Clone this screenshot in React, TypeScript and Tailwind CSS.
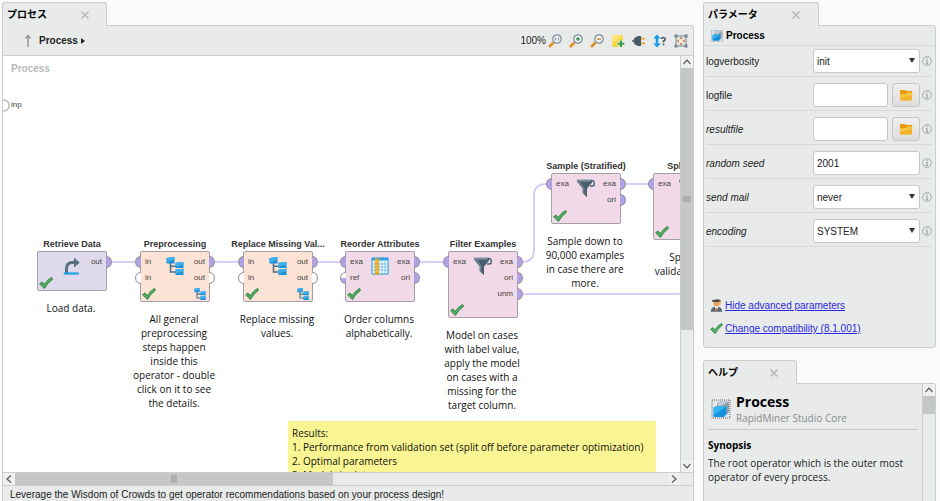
import type { ReactNode } from 'react';
import { clsx } from 'clsx';

type PortKind = 'full' | 'empty' | 'half';
type Port = { label: string; kind: PortKind };
type IconName = 'retrieve' | 'tree' | 'table' | 'funnel';

type Operator = {
  name: string;
  x: number;
  y: number;
  height: number;
  color: string;
  icon: IconName;
  inputs: Port[];
  outputs: Port[];
  nested?: boolean;
  notes: string[];
};

const full = (label: string): Port => ({ label, kind: 'full' });
const empty = (label: string): Port => ({ label, kind: 'empty' });

const operators: Operator[] = [
  {
    name: 'Retrieve Data', x: 34, y: 195, height: 40, color: 'bg-[#dfdaeb]', icon: 'retrieve',
    inputs: [], outputs: [full('out')],
    notes: ['Load data.'],
  },
  {
    name: 'Preprocessing', x: 137, y: 195, height: 51, color: 'bg-[#fde3d6]', icon: 'tree',
    inputs: [full('in'), empty('in')], outputs: [full('out'), empty('out')], nested: true,
    notes: ['All general', 'preprocessing', 'steps happen', 'inside this', 'operator - double', 'click on it to see', 'the details.'],
  },
  {
    name: 'Replace Missing Val...', x: 240, y: 195, height: 51, color: 'bg-[#fde3d6]', icon: 'tree',
    inputs: [full('in'), empty('in')], outputs: [full('out'), empty('out')], nested: true,
    notes: ['Replace missing', 'values.'],
  },
  {
    name: 'Reorder Attributes', x: 342, y: 195, height: 51, color: 'bg-[#f1d9e7]', icon: 'table',
    inputs: [full('exa'), { label: 'ref', kind: 'half' }], outputs: [full('exa'), full('ori')],
    notes: ['Order columns', 'alphabetically.'],
  },
  {
    name: 'Filter Examples', x: 445, y: 195, height: 67, color: 'bg-[#f1d9e7]', icon: 'funnel',
    inputs: [full('exa')], outputs: [full('exa'), full('ori'), full('unm')],
    notes: ['Model on cases', 'with label value,', 'apply the model', 'on cases with a', 'missing for the', 'target column.'],
  },
  {
    name: 'Sample (Stratified)', x: 548, y: 117, height: 51, color: 'bg-[#f1d9e7]', icon: 'funnel',
    inputs: [full('exa')], outputs: [full('exa'), full('ori')],
    notes: ['Sample down to', '90,000 examples', 'in case there are', 'more.'],
  },
  {
    name: 'Split Data', x: 650, y: 117, height: 67, color: 'bg-[#f1d9e7]', icon: 'funnel',
    inputs: [full('exa')], outputs: [full('par')],
    notes: ['Split off', 'validation set.'],
  },
];

const operatorIcons: Record<IconName, ReactNode> = {
  retrieve: (
    <svg viewBox="0 0 18 18" className="size-[18px]">
      <path d="M3.500 16V11.500Q3.500 5.500 9.500 5.500H12" fill="none" stroke="#56707f" strokeWidth="3" />
      <path d="M11 .8 16.800 5.500 11 10.500z" fill="#56707f" />
      <path d="M.8 16.500h15" stroke="#1b9fe6" strokeWidth="2.200" />
    </svg>
  ),
  tree: <TreeIcon className="size-[18px]" />,
  table: (
    <svg viewBox="0 0 18 18" className="size-[18px]">
      <path d="M1 1h16v16H1z" fill="#fff" stroke="#1e94d4" />
      <path d="M1 1h16v2.500H1z" fill="#1e9de0" />
      <path d="M4 1v16M8 1v16M11 1v16M14 1v16M1 7h16M1 10h16M1 13h16" stroke="#5eb9e8" strokeWidth=".8" />
      <path d="M4 1.500h4v16H4z" fill="#f2a61c" />
      <path d="M4 5h4M4 8h4M4 11h4M4 14h4" stroke="#fbd27a" strokeWidth=".7" />
    </svg>
  ),
  funnel: (
    <svg viewBox="0 0 18 18" className="size-[18px]">
      <path d="M0 .8h15v2.700L10 9.500V18l-4.500-4V9.500L0 2.800z" fill="#6a808e" />
      <path d="M3.500 3H15L10 9.500V18l-2.500-2.200V9z" fill="#4a606e" />
      <path d="M0 1.200h15" stroke="#8799a5" strokeWidth=".8" />
      <path d="M13 7h2.500Q17.300 7 17.300 4.500T15.500 1.500Q13.500 1.500 13.500 4.500" fill="none" stroke="#4a606e" strokeWidth="1.400" />
    </svg>
  ),
};

function TreeIcon({ className }: { className: string }) {
  return (
    <svg viewBox="0 0 18 18" className={className}>
      <path d="M4.500 6v9H11M4.500 9.200H11" fill="none" stroke="#56707f" strokeWidth="1.600" />
      <path d="M.5 1 8.500 0v6.500h-8zM9.500 5.800l8-.8v6h-8zM9.500 12.600l8-.8V18h-8z" fill="#1a90d6" />
      <path d="M.5 1 8.500 0v2.500L.5 5.500zM9.500 5.800l8-.8v2.500l-8 2.500zM9.500 12.600l8-.8v2.500l-8 2.500z" fill="#3fb0ee" />
    </svg>
  );
}

function CheckIcon({ className }: { className: string }) {
  return (
    <svg viewBox="0 0 14 12" className={className}>
      <path d="M.5 6.800 3 4.800l2.200 2.500Q8.500 2.500 12.500.3l1.200 1.900Q8.500 6 5.500 11.700z" fill="#3d9b50" stroke="#287d3c" strokeWidth=".6" />
      <path d="M2 6.600 5.200 9.200Q8 4.500 12 1.800" fill="none" stroke="#6fc07b" strokeWidth=".8" />
    </svg>
  );
}

function ProcessIcon({ className }: { className: string }) {
  return (
    <svg viewBox="0 0 20 20" className={className}>
      <path d="M1 1h18v18H1z" fill="#e1e7ec" stroke="#58646f" strokeDasharray="1 1" />
      <path d="M6 4l2-1.500h10V13l-2 2.500H6z" fill="#929faa" />
      <path d="M6 4l2-1.500h10L8 8z" fill="#c2cbd3" />
      <path d="M2.500 9 4.500 7.500h11V15l-2.500 3H2.500z" fill="#1492dc" />
      <path d="M2.500 9 4.500 7.500h11L2.500 16z" fill="#35b5f5" />
    </svg>
  );
}

function FolderIcon() {
  return (
    <svg viewBox="0 0 14 12" className="h-3 w-[14px]">
      <path d="M1 1h5l1 1h6V11H1z" fill="#e99b0e" />
      <path d="M.5 5.500 7 5l1.500-1.500H13.500L12.800 11.500H1.500z" fill="#f8c643" />
      <path d="M1.300 9 13 6l-.3 5.500H1.500z" fill="#f1b22e" />
    </svg>
  );
}

function InfoIcon() {
  return (
    <svg viewBox="0 0 10 10" className="size-[10px] shrink-0" fill="none" stroke="#999c9c">
      <circle cx="5" cy="5" r="4.400" strokeWidth=".8" />
      <path d="M5 4v3.700M4 4.400h1M3.800 7.600h2.400M5 1.900v1.300" />
    </svg>
  );
}

function GraduateIcon() {
  return (
    <svg viewBox="0 0 13 13" className="size-[13px] shrink-0">
      <path d="M1.500 1.200 8 .3l2.500.8V3H3z" fill="#4b4741" />
      <path d="M3.500 3h6v3.500L6.500 8.500l-3-2z" fill="#e9a55e" />
      <path d="M10 1.500V6" stroke="#e8a33a" />
      <path d="M.8 12.800Q1 8.500 4 8h5q3 .5 3.200 4.800z" fill="#53697a" />
      <path d="m4.500 7.500 2 4.500 2-4.500z" fill="#f5f5f5" />
      <path d="m6 9h1l.5 3-1 1-1-1z" fill="#d07c2c" />
    </svg>
  );
}

function MagnifierIcon({ children }: { children: ReactNode }) {
  return (
    <svg viewBox="0 0 14 14" className="size-[14px]">
      <path d="M1 13 5.500 8.500" stroke="#e2901f" strokeWidth="2.600" />
      <circle cx="9" cy="5" r="4.200" fill="#f1f4f6" stroke="#7b8b9b" strokeWidth="1.200" />
      {children}
    </svg>
  );
}

const tools: { label: string; icon: ReactNode }[] = [
  { label: 'Actual size', icon: <MagnifierIcon><path d="M7.300 3.500v3M10.700 3.500v3M9 3.900v.8M9 5.500v.8" stroke="#7b8b9b" strokeWidth=".9" /></MagnifierIcon> },
  { label: 'Zoom in', icon: <MagnifierIcon><path d="M7 5h4M9 3v4" stroke="#3a9b4f" strokeWidth="1.400" /></MagnifierIcon> },
  { label: 'Zoom out', icon: <MagnifierIcon><path d="M7 5h4" stroke="#d9772a" strokeWidth="1.400" /></MagnifierIcon> },
  {
    label: 'Add note',
    icon: (
      <svg viewBox="0 0 14 14" className="size-[14px]">
        <path d="M1 1h11v12H1z" fill="#f5d848" />
        <path d="M1 1h11L1 9z" fill="#fae577" />
        <path d="M10 6v7.500M6.200 9.800h7.600" stroke="#e8ebea" strokeWidth="3.200" />
        <path d="M10 6.500v6.600M6.700 9.800h6.600" stroke="#3b9f4c" strokeWidth="2" />
      </svg>
    ),
  },
  {
    label: 'Connections',
    icon: (
      <svg viewBox="0 0 14 14" className="size-[14px]">
        <path d="M0 7h2" stroke="#475c6b" strokeWidth="1.500" />
        <path d="M9 2v10H6.500Q1.500 11 1.500 7t5-5z" fill="#475c6b" />
        <path d="M9 4.700h4M9 9.300h4" stroke="#eba52a" strokeWidth="1.800" />
      </svg>
    ),
  },
  {
    label: 'Operator order',
    icon: (
      <svg viewBox="0 0 14 14" className="size-[14px]">
        <path d="M4 3v8" stroke="#1a9ce3" strokeWidth="2.600" />
        <path d="m4 .5 3.800 4H.2zM4 13.500l3.800-4H.2z" fill="#1a9ce3" />
        <path d="M8.500 5Q8.700 3.500 10.400 3.500T12.200 5.200Q12.200 6.200 10.500 7v1.500M10.500 9.700v1.500" fill="none" stroke="#44586a" strokeWidth="1.700" />
      </svg>
    ),
  },
  {
    label: 'Auto fit',
    icon: (
      <svg viewBox="0 0 14 14" className="size-[14px]">
        <path d="M2 2h10v10H2z" fill="none" stroke="#76848f" />
        <path d="M.5.5h3v3h-3zM10.500.5h3v3h-3zM.5 10.500h3v3h-3zM10.500 10.500h3v3h-3z" fill="#76848f" />
        <path d="m7 2.800 1.800 2H5.200zM7 11.200l1.800-2H5.200zM2.800 7l2-1.800v3.600zM11.200 7l-2-1.800v3.600z" fill="#d4692a" />
      </svg>
    ),
  },
];

function Tab({ title, className }: { title: string; className: string }) {
  return (
    <div className={clsx('relative z-10 -mb-px flex h-6 shrink-0 items-center justify-between rounded-t-[3px] border border-b-0 border-[#cbcdcd] bg-[#e9ebeb] pl-1', className)}>
      <h2 className="text-[10px] font-bold text-black">{title}</h2>
      <button type="button" aria-label={`Close ${title}`} className="p-1">
        <svg viewBox="0 0 8 8" className="size-2">
          <path d="m.5.5 7 7M7.500.5l-7 7" stroke="#b3b5b5" strokeWidth="1.400" />
        </svg>
      </button>
    </div>
  );
}

function ScrollButton({ label, path }: { label: string; path: string }) {
  return (
    <button type="button" aria-label={label} className="grid size-[12px] shrink-0 place-items-center bg-[#eff0f0]">
      <svg viewBox="0 0 8 8" className="size-2">
        <path d={path} fill="none" stroke="#666" strokeWidth="1.400" />
      </svg>
    </button>
  );
}

function PortShape({ kind, side }: { kind: PortKind; side: 'in' | 'out' }) {
  return (
    <svg viewBox="0 0 6 12" className={clsx('h-3 w-[6px]', side === 'out' && '-scale-x-100')}>
      <path d="M6 .5Q.6.8.6 6T6 11.500z" fill={kind === 'full' ? '#b3a1e6' : '#fff'} />
      {kind === 'half' && <path d="M.6 6Q.6 11.200 6 11.500V6z" fill="#b3a1e6" />}
      <path d="M6 .5Q.6.8.6 6T6 11.500" fill="none" stroke="#8f8f8f" />
    </svg>
  );
}

function PortColumn({ ports, side }: { ports: Port[]; side: 'in' | 'out' }) {
  return (
    <ul className={clsx('absolute top-1 flex flex-col gap-1', side === 'in' ? '-left-[6px]' : '-right-[6px]')}>
      {ports.map((port, i) => (
        <li key={i} className={clsx('flex h-3 items-center gap-1', side === 'out' && 'flex-row-reverse')}>
          <PortShape kind={port.kind} side={side} />
          <span className="text-[8px] leading-3 text-[#444]">{port.label}</span>
        </li>
      ))}
    </ul>
  );
}

function OperatorNode({ op }: { op: Operator }) {
  return (
    <div className="absolute w-[70px]" style={{ left: op.x, top: op.y }}>
      <h3 className="absolute bottom-full left-1/2 -translate-x-1/2 whitespace-nowrap pb-px text-[9px] leading-3 font-bold text-[#333]">
        {op.name}
      </h3>
      <div className={clsx('relative rounded-[2px] border border-[#a5a0a5]', op.color)} style={{ height: op.height }}>
        <PortColumn ports={op.inputs} side="in" />
        <PortColumn ports={op.outputs} side="out" />
        <div className="flex justify-center pt-[5px]">{operatorIcons[op.icon]}</div>
        <CheckIcon className="absolute bottom-px left-px h-3 w-[14px]" />
        {op.nested && <TreeIcon className="absolute right-[3px] bottom-px size-3" />}
      </div>
      <p className="absolute top-full left-1/2 -translate-x-1/2 whitespace-pre pt-[10px] pr-[2px] text-center font-['Open_Sans',sans-serif] text-[10px] leading-[14px] text-[#111]">
        {op.notes.join('\n')}
      </p>
    </div>
  );
}

function ProcessPanel() {
  return (
    <main className="flex min-w-0 flex-1 flex-col">
      <Tab title="プロセス" className="w-[105px] pr-[13px]" />
      <div className="flex min-h-0 flex-1 flex-col rounded-tr-[3px] border border-b-0 border-[#cbcdcd] bg-[#e8ebea]">
        <div className="flex h-[30px] shrink-0 items-center justify-between border-b border-[#cbcdcd] pr-[5px] pl-5">
          <div className="flex items-center gap-[6px] text-[10px] font-bold text-[#222]">
            <button type="button" aria-label="Up">
              <svg viewBox="0 0 10 14" className="h-[14px] w-[10px]">
                <path d="M5 13V2M2.500 4.500 5 1.500l2.500 3" fill="none" stroke="#999" strokeWidth="1.500" />
              </svg>
            </button>
            <button type="button" className="flex items-center gap-[3px]">
              Process
              <svg viewBox="0 0 4 8" className="h-2 w-1"><path d="m0 1 4 3-4 3z" fill="#222" /></svg>
            </button>
          </div>
          <div className="flex items-center gap-[2px]">
            <span className="text-[10px] text-[#222]">100%</span>
            <div className="flex gap-[7px]">
              {tools.map((tool) => (
                <button key={tool.label} type="button" aria-label={tool.label}>{tool.icon}</button>
              ))}
            </div>
          </div>
        </div>

        <div className="flex min-h-0 flex-1">
          <div className="relative min-w-0 flex-1 overflow-hidden bg-white">
            <h1 className="px-2 pt-[6px] text-[10px] leading-[14px] font-bold text-[#b9b9b9]">Process</h1>
            <svg className="absolute inset-0 size-full" fill="none" stroke="#c9c0f5" strokeWidth="1.500">
              <path d="M108 206h24M211 206h24M313 206h24M416 206h24M519 206q12 0 12-12v-54q0-12 12-12M622 128h24M519 238h300" />
              <path d="M0 44q6 0 6 5.500T0 55" stroke="#bbb" />
            </svg>
            <span className="absolute top-[43px] left-2 text-[8px] leading-3 text-[#444]">inp</span>
            {operators.map((op) => (
              <OperatorNode key={op.name} op={op} />
            ))}
            <ol className="absolute top-[365px] left-[285px] w-[368px] bg-[#f9f592] px-1 py-[5px] font-['Open_Sans',sans-serif] text-[10px] leading-[14px] text-[#111]">
              <li>Results:</li>
              <li>1. Performance from validation set (split off before parameter optimization)</li>
              <li>2. Optimal parameters</li>
              <li>3. Models in data</li>
            </ol>
          </div>
          <div className="flex w-[13px] shrink-0 flex-col border-l border-[#cbcdcd]">
            <ScrollButton label="Scroll up" path="m.5 6 3.500-4 3.500 4" />
            <div className="grid h-[63%] place-items-center bg-[#c5c7c7]">
              <div className="h-[6px] w-2 bg-[#adafaf]" />
            </div>
            <div className="flex-1" />
            <ScrollButton label="Scroll down" path="m.5 2 3.500 4 3.500-4" />
          </div>
        </div>

        <div className="flex h-[14px] shrink-0 border-y border-[#cbcdcd] pr-[13px]">
          <ScrollButton label="Scroll left" path="M6 .5 2 4l4 3.500" />
          <div className="grid w-[47%] place-items-center bg-[#c5c7c7]">
            <div className="h-2 w-[6px] bg-[#adafaf]" />
          </div>
          <div className="flex-1" />
          <ScrollButton label="Scroll right" path="m2 .5 4 3.500-4 3.500" />
        </div>
        <p className="h-[15px] shrink-0 overflow-hidden whitespace-nowrap pt-[3px] pl-[7px] text-[10px] leading-3 text-[#222]">
          Leverage the Wisdom of Crowds to get operator recommendations based on your process design!
        </p>
      </div>
    </main>
  );
}

type Parameter = {
  id: string;
  type: 'select' | 'file' | 'text';
  value?: string;
  advanced?: boolean;
};

const parameters: Parameter[] = [
  { id: 'logverbosity', type: 'select', value: 'init' },
  { id: 'logfile', type: 'file' },
  { id: 'resultfile', type: 'file', advanced: true },
  { id: 'random seed', type: 'text', value: '2001', advanced: true },
  { id: 'send mail', type: 'select', value: 'never', advanced: true },
  { id: 'encoding', type: 'select', value: 'SYSTEM', advanced: true },
];

const fieldClass = 'h-6 w-full min-w-0 rounded-[3px] border border-[#c6c8c8] bg-white text-[#222]';

function ParameterRow({ param }: { param: Parameter }) {
  const id = param.id.replace(' ', '-');

  return (
    <div className="flex items-center gap-[2px] border-b border-[#d6d9d9] pt-[6px] pb-[3px] text-[10px] first:pt-[3px]">
      <label htmlFor={id} className={clsx('flex-1 text-[#222]', param.advanced && 'italic')}>{param.id}</label>
      <div className="flex w-[107px] gap-1">
        {param.type === 'select' && (
          <div className="relative w-full">
            <select id={id} defaultValue={param.value} className={clsx(fieldClass, 'appearance-none px-[3px]')}>
              <option>{param.value}</option>
            </select>
            <svg viewBox="0 0 6 5" className="pointer-events-none absolute top-[9px] right-[5px] h-[5px] w-[6px]">
              <path d="M0 0h6L3 5z" fill="#333" />
            </svg>
          </div>
        )}
        {param.type === 'text' && <input id={id} type="text" defaultValue={param.value} className={clsx(fieldClass, 'px-[3px]')} />}
        {param.type === 'file' && (
          <>
            <input id={id} type="text" className={clsx(fieldClass, 'px-[3px]')} />
            <button
              type="button"
              aria-label={`Choose ${param.id}`}
              className="grid h-6 w-7 shrink-0 place-items-center rounded-[3px] border border-[#c6c8c8] bg-linear-to-b from-[#f0f0f0] to-[#dcdcdc]"
            >
              <FolderIcon />
            </button>
          </>
        )}
      </div>
      <InfoIcon />
    </div>
  );
}

function ParametersPanel() {
  return (
    <section>
      <Tab title="パラメータ" className="w-[116px] pr-[14px]" />
      <div className="rounded-b-[3px] rounded-tr-[3px] border border-[#cbcdcd] bg-[#e8ebea] pb-[7px]">
        <div className="flex h-5 items-center gap-[3px] border-b border-[#d6d9d9] pl-[7px]">
          <ProcessIcon className="size-3" />
          <h3 className="text-[10px] font-bold text-black">Process</h3>
        </div>
        <form className="pr-[3px] pl-[2px]">
          {parameters.map((param) => (
            <ParameterRow key={param.id} param={param} />
          ))}
        </form>
        <div className="mt-[47px] flex flex-col pl-[6px] text-[10px] text-[#2a2ae0]">
          <a href="#advanced" className="flex h-[23px] items-center gap-[2px]">
            <GraduateIcon />
            <span className="underline">Hide advanced parameters</span>
          </a>
          <a href="#compatibility" className="flex h-[23px] items-center gap-[2px]">
            <CheckIcon className="h-[11px] w-[13px] shrink-0" />
            <span className="underline">Change compatibility (8.1.001)</span>
          </a>
        </div>
      </div>
    </section>
  );
}

function HelpPanel() {
  return (
    <section className="flex min-h-0 flex-1 flex-col">
      <Tab title="ヘルプ" className="w-[94px] pr-[14px]" />
      <div className="flex min-h-0 flex-1 rounded-tr-[3px] border border-b-0 border-[#cbcdcd] bg-[#e8ebea] font-['Open_Sans',sans-serif]">
        <div className="min-w-0 flex-1 overflow-hidden px-1 pt-[9px]">
          <div className="flex items-center gap-[5px] border-b border-[#c6c8c8] pb-1 pl-[3px]">
            <ProcessIcon className="size-5" />
            <div>
              <h3 className="text-[14px] leading-[18px] font-bold text-black">Process</h3>
              <p className="text-[10px] leading-[14px] text-[#8a8c8c]">RapidMiner Studio Core</p>
            </div>
          </div>
          <h4 className="mt-2 text-[10px] leading-[14px] font-bold text-black">Synopsis</h4>
          <p className="mt-1 text-[10px] leading-[14px] text-[#222]">
            The root operator which is the outer most operator of every process.
          </p>
        </div>
        <div className="w-[13px] shrink-0 border-l border-[#cbcdcd]">
          <ScrollButton label="Scroll help up" path="m.5 6 3.500-4 3.500 4" />
          <div className="h-[18px] bg-[#c5c7c7]" />
        </div>
      </div>
    </section>
  );
}

export default function App() {
  return (
    <div className="flex h-screen gap-[9px] overflow-hidden bg-[#fafafa] pt-[2px] pr-1 pl-[2px] font-['Liberation_Sans','Noto_Sans_CJK_JP',sans-serif]">
      <ProcessPanel />
      <aside className="flex w-[233px] shrink-0 flex-col gap-3">
        <ParametersPanel />
        <HelpPanel />
      </aside>
    </div>
  );
}
